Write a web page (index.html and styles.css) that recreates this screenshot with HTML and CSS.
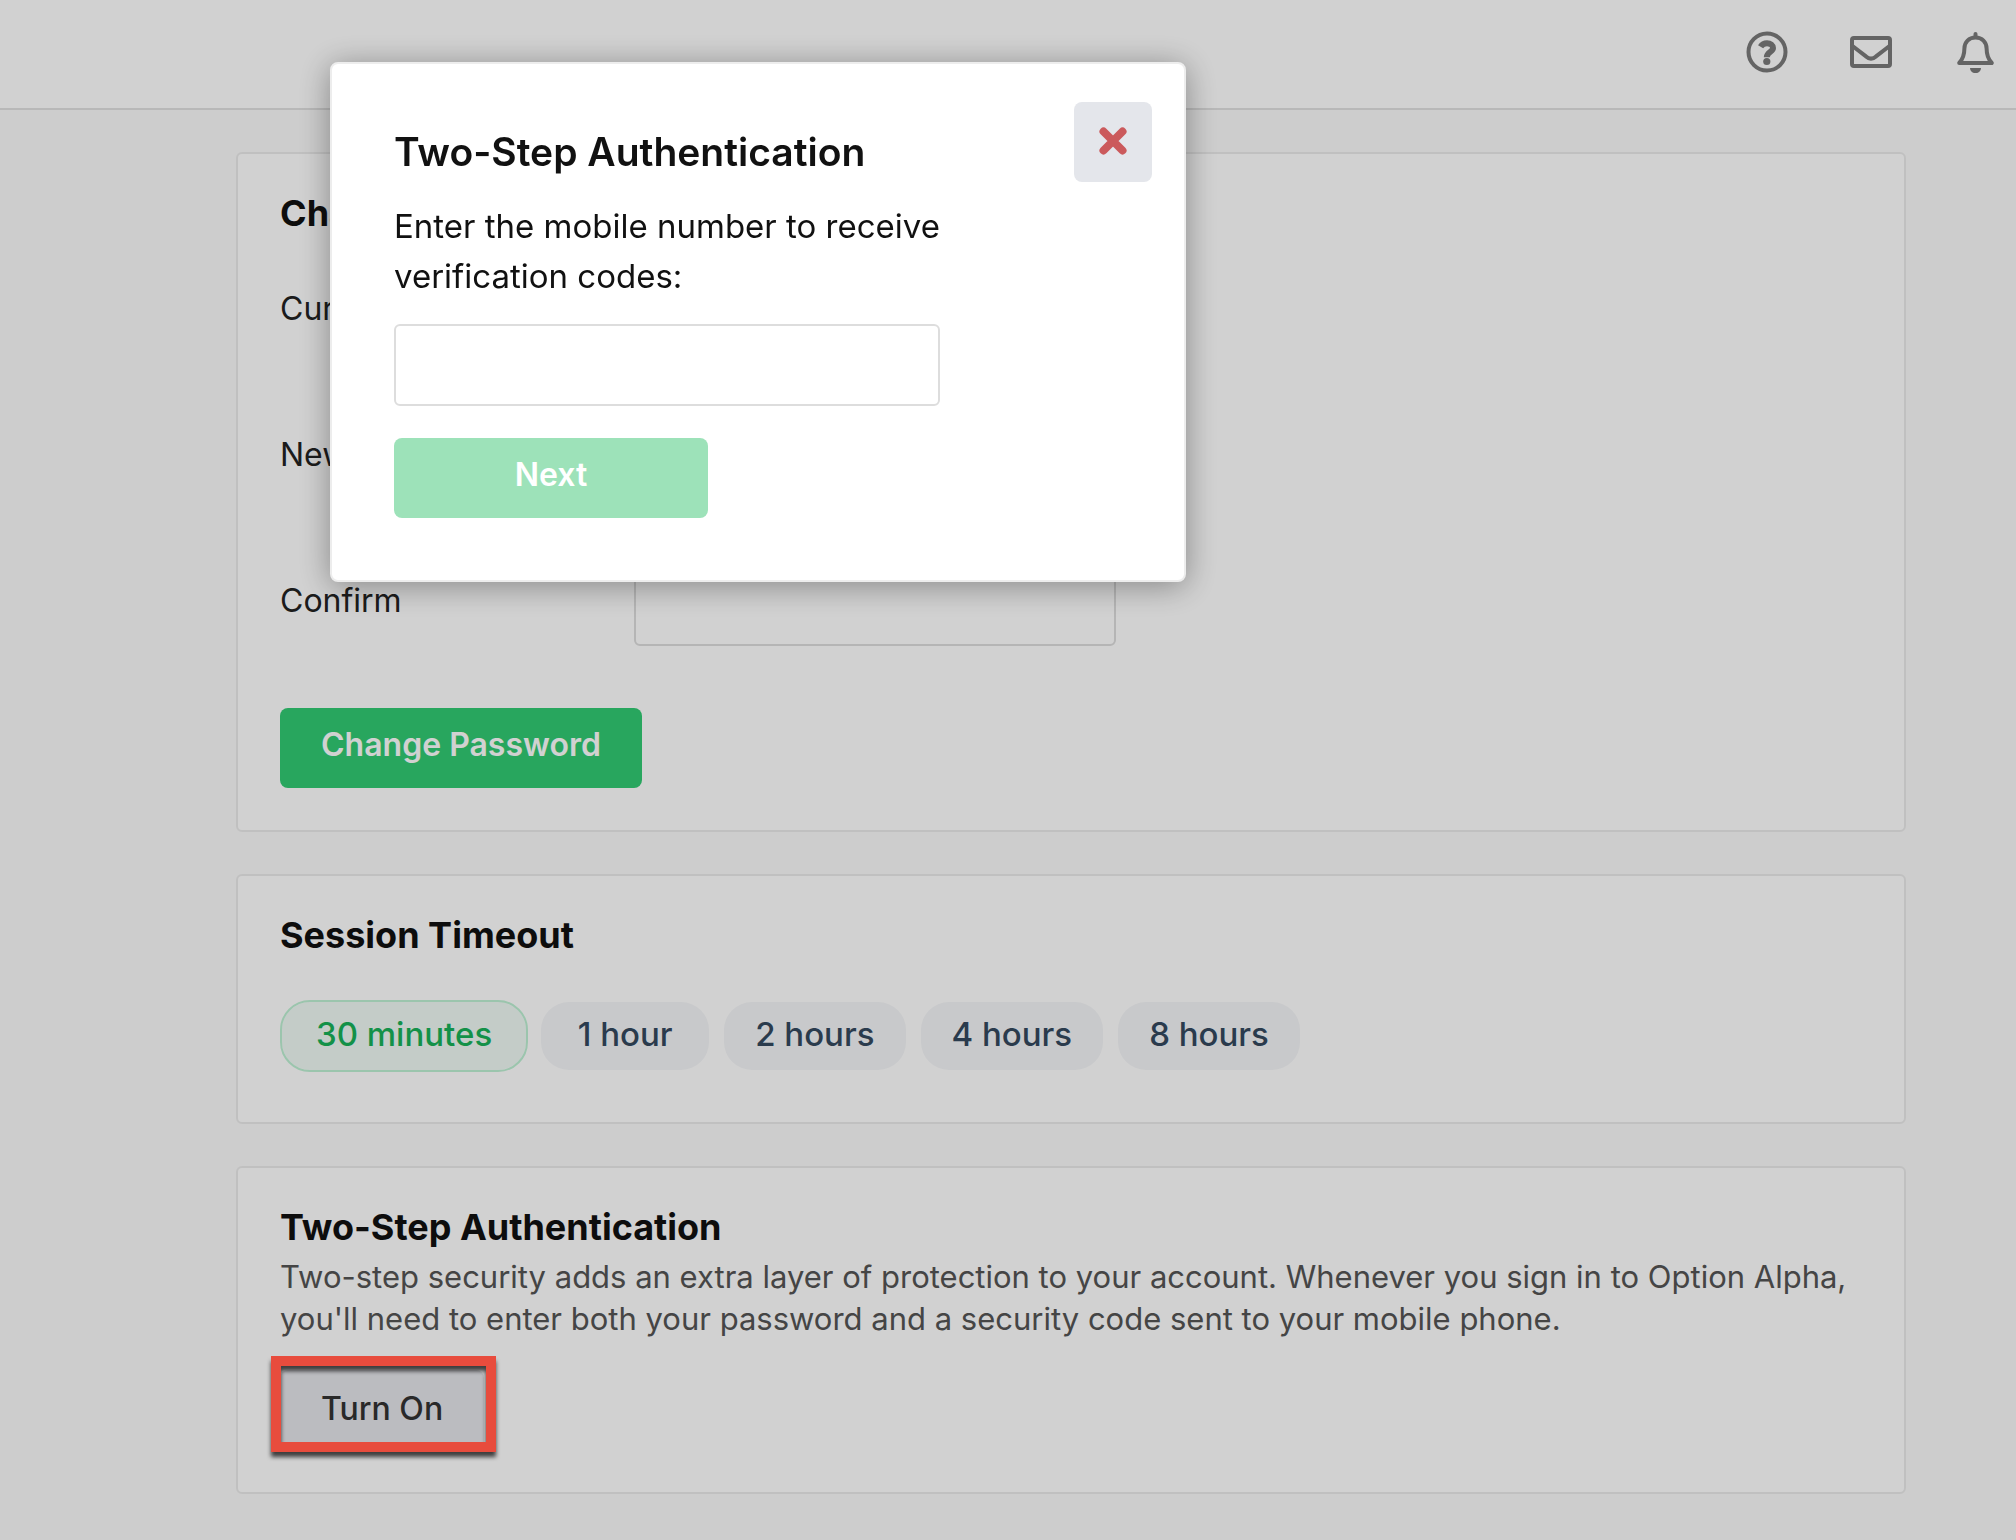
FILE: index.html
```html
<!DOCTYPE html>
<html lang="en">
<head>
  <meta charset="utf-8">
  <meta name="viewport" content="width=device-width, initial-scale=1">
  <title>Security settings</title>
  <link rel="stylesheet" href="styles.css">
</head>
<body>
  <header class="topbar">
    <button class="icon-button" type="button" aria-label="Help">
      <svg viewBox="0 0 42 42" aria-hidden="true">
        <circle class="line" cx="21" cy="21" r="18.5"/>
        <path class="line line-bold" d="M14.6 15.8C16.2 13.2 18.2 12.2 21 12.2C24.4 12.2 27 14.2 27 17.1C27 21 20.8 20.9 20.8 26.2"/>
        <circle class="solid" cx="20.8" cy="30.5" r="3.6"/>
      </svg>
    </button>
    <button class="icon-button" type="button" aria-label="Messages">
      <svg viewBox="0 0 42 42" aria-hidden="true">
        <rect class="line" x="2" y="7" width="38" height="28" rx="2"/>
        <path class="line" d="M2.5 15L16 25.4Q21 29.8 26 25.4L39.5 15"/>
      </svg>
    </button>
    <button class="icon-button" type="button" aria-label="Notifications">
      <svg viewBox="0 0 42 42" aria-hidden="true">
        <path class="line" d="M21.5 3V6"/>
        <path class="line" d="M5.2 32C9.3 27.8 10.4 24.4 10.4 17.6C10.4 11 15 6.6 21.5 6.6C28 6.6 32.6 11 32.6 17.6C32.6 24.4 33.7 27.8 37.8 32Z"/>
        <path class="solid" d="M16 37H27A5.5 5.2 0 0 1 16 37Z"/>
      </svg>
    </button>
  </header>

  <main class="content">
    <form class="card">
      <h2 class="card-title">Change Password</h2>
      <div class="fields">
        <label class="field-label" for="current">Current</label>
        <input class="input" id="current" type="password">
        <label class="field-label" for="new">New</label>
        <input class="input" id="new" type="password">
        <label class="field-label" for="confirm">Confirm</label>
        <input class="input" id="confirm" type="password">
      </div>
      <button class="button button-primary" type="button">Change Password</button>
    </form>

    <section class="card">
      <h2 class="card-title">Session Timeout</h2>
      <div class="pills" role="radiogroup" aria-label="Session Timeout">
        <label class="pill"><input class="pill-input" type="radio" name="timeout" checked>30 minutes</label>
        <label class="pill"><input class="pill-input" type="radio" name="timeout">1 hour</label>
        <label class="pill"><input class="pill-input" type="radio" name="timeout">2 hours</label>
        <label class="pill"><input class="pill-input" type="radio" name="timeout">4 hours</label>
        <label class="pill"><input class="pill-input" type="radio" name="timeout">8 hours</label>
      </div>
    </section>

    <section class="card">
      <h2 class="card-title">Two-Step Authentication</h2>
      <p class="description">Two-step security adds an extra layer of protection to your account. Whenever you sign in to Option Alpha, you'll need to enter both your password and a security code sent to your mobile phone.</p>
      <div class="highlighted">
        <button class="button button-muted" type="button">Turn On</button>
      </div>
    </section>
  </main>

  <div class="overlay">
    <form class="modal" role="dialog" aria-labelledby="modal-title">
      <h2 class="modal-title" id="modal-title">Two-Step Authentication</h2>
      <label class="modal-label" for="mobile">Enter the mobile number to receive verification codes:</label>
      <input class="input modal-input" id="mobile" type="tel">
      <button class="button button-primary modal-next" type="button" disabled>Next</button>
      <button class="modal-close" type="button" aria-label="Close">
        <svg viewBox="0 0 28 28" aria-hidden="true"><path d="M4.5 4.5L23.5 23.5M23.5 4.5L4.5 23.5"/></svg>
      </button>
    </form>
  </div>
</body>
</html>
```
FILE: styles.css
```css
* {
  box-sizing: border-box;
}

body {
  margin: 0;
  min-height: 100vh;
  background: #fafafa;
  color: #111;
  font-family: Inter, "Liberation Sans", sans-serif;
}

h2,
p {
  margin: 0;
}

button,
input {
  font: inherit;
}

/* Top bar */

.topbar {
  display: flex;
  align-items: center;
  justify-content: flex-end;
  gap: 62px;
  height: 110px;
  padding: 0 20px 4px;
  border-bottom: 2px solid #e1e1e1;
  background: #fff;
}

.icon-button {
  width: 42px;
  height: 42px;
  padding: 0;
  border: 0;
  background: none;
  color: #7a7a7a;
}

.icon-button svg {
  display: block;
}

.line {
  fill: none;
  stroke: currentColor;
  stroke-width: 4;
  stroke-linecap: round;
  stroke-linejoin: round;
}

.line-bold {
  stroke-width: 6;
  stroke-linecap: butt;
}

.solid {
  fill: currentColor;
}

/* Cards */

.content {
  display: flex;
  flex-direction: column;
  gap: 42px;
  padding: 42px 110px 46px 236px;
}

.card {
  padding: 42px;
  border: 2px solid #ebebeb;
  border-radius: 6px;
  background: #fff;
}

.card-title {
  font-size: 36px;
  font-weight: 700;
  line-height: 34px;
}

.fields {
  display: grid;
  grid-template-columns: 354px 482px;
  row-gap: 64px;
  margin: 42px 0 62px;
}

.field-label {
  padding-top: 17px;
  color: #222;
  font-size: 32px;
  line-height: 40px;
}

.input {
  height: 82px;
  padding: 0 20px;
  border: 2px solid #ddd;
  border-radius: 6px;
  background: #fff;
  font-size: 32px;
}

.button {
  display: block;
  height: 80px;
  padding: 0 41px;
  border: 0;
  border-radius: 8px;
  font-size: 32px;
  line-height: 40px;
}

.button-primary {
  padding-bottom: 6px;
  background: #31cb73;
  color: #fff;
  font-weight: 600;
}

.button-primary:disabled {
  background: #9de2b9;
}

.button-muted {
  padding-bottom: 2px;
  background: #e4e6eb;
  color: #333;
  font-weight: 500;
}

/* Session timeout choices */

.pills {
  display: flex;
  flex-wrap: wrap;
  gap: 11px;
  margin: 48px 0 8px;
}

.pill {
  min-width: 172px;
  padding: 12px 31px 16px;
  border: 2px solid transparent;
  border-radius: 30px;
  background: #f5f6f8 padding-box;
  color: #34495e;
  font-size: 33px;
  font-weight: 500;
  line-height: 40px;
  text-align: center;
}

.pill:has(:checked) {
  padding-inline: 34px;
  border-color: #bef1d4;
  background-color: #eff9f5;
  color: #18b158;
}

.pill-input {
  position: absolute;
  opacity: 0;
}

/* Two-step section */

.description {
  margin: 12px 0 30px;
  color: #555;
  font-size: 31px;
  line-height: 42px;
}

.highlighted {
  position: relative;
  width: fit-content;
}

.highlighted::after {
  content: "";
  position: absolute;
  z-index: 20;
  inset: -14px -12px -2px -9px;
  border: 10px solid #e84c3d;
  filter: drop-shadow(0 5px 2px rgba(0, 0, 0, 0.7));
  pointer-events: none;
}

/* Modal */

.overlay {
  position: fixed;
  z-index: 10;
  inset: 0;
  padding: 62px 330px;
  background: rgba(0, 0, 0, 0.18);
}

.modal {
  position: relative;
  display: flex;
  flex-direction: column;
  align-items: flex-start;
  max-width: 856px;
  padding: 62px;
  border: 2px solid #ededed;
  border-radius: 8px;
  background: #fff;
  box-shadow: 0 4px 32px rgba(0, 0, 0, 0.36);
}

.modal-title {
  font-size: 39px;
  font-weight: 600;
  line-height: 52px;
}

.modal-label {
  max-width: 600px;
  margin: 23px 0;
  font-size: 33px;
  line-height: 50px;
}

.modal-input {
  width: 100%;
  max-width: 546px;
}

.modal-next {
  width: 314px;
  margin-top: 32px;
}

.modal-close {
  position: absolute;
  top: 38px;
  right: 32px;
  display: grid;
  place-items: center;
  width: 78px;
  height: 80px;
  padding: 0 0 2px;
  border: 0;
  border-radius: 8px;
  background: #e4e6eb;
}

.modal-close svg {
  width: 28px;
  height: 28px;
  fill: none;
  stroke: #cb5a5c;
  stroke-width: 8;
  stroke-linecap: round;
}
```
